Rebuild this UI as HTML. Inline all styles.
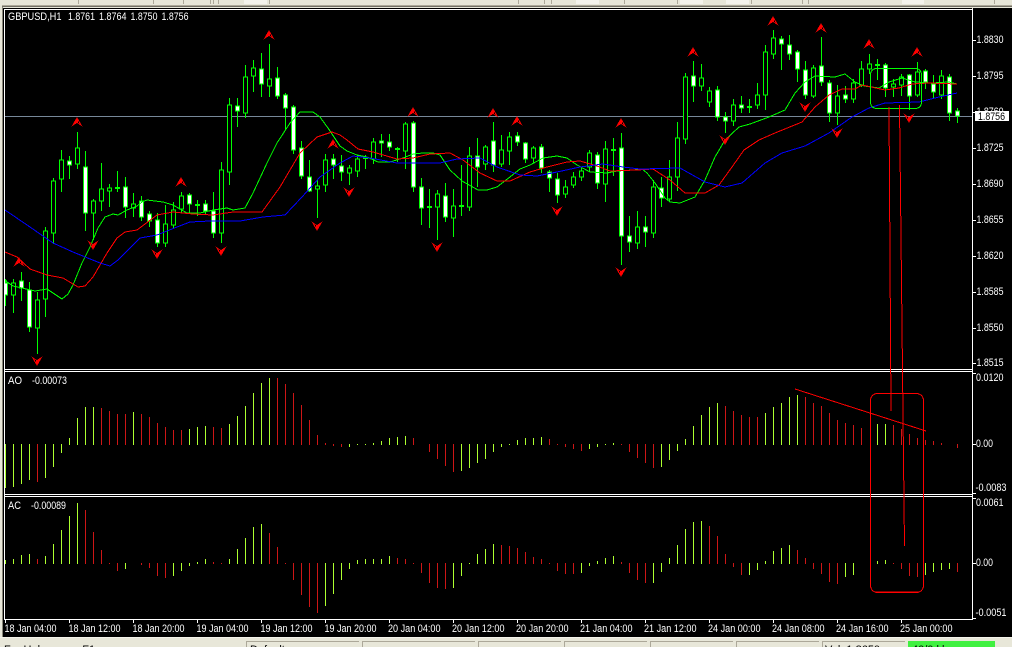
<!DOCTYPE html>
<html lang="en"><head><meta charset="utf-8"><title>GBPUSD,H1</title>
<style>html,body{margin:0;padding:0;background:#000;width:1012px;height:647px;overflow:hidden}svg{display:block}text{font-family:"Liberation Sans",sans-serif;font-size:11px}</style>
</head><body>
<svg xmlns="http://www.w3.org/2000/svg" width="1012" height="647" viewBox="0 0 1012 647" shape-rendering="crispEdges">
<defs><clipPath id="m"><rect x="5" y="10" width="967" height="359"/></clipPath></defs>
<rect width="1012" height="647" fill="#000"/>
<!-- top toolbar -->
<rect width="1012" height="5" fill="#e7e6d8"/><rect y="5" width="1012" height="1" fill="#aca899"/><rect y="6" width="1012" height="1" fill="#716f64"/><rect y="7" width="1012" height="2" fill="#e7e6d8"/>
<rect x="973" y="8" width="39" height="1" fill="#000"/>
<path d="M78.5 0V4M153.5 0V4M183.5 0V4M210.5 0V4M213.5 0V4M218.5 0V4M269.5 0V4M518.5 0V4M544.5 0V4M551.5 0V4M624.5 0V4M677.5 0V4M751.5 0V4M802.5 0V4M808.5 0V4M994.5 0V4" stroke="#aca899" fill="none"/>
<path d="M244 0h23v4h-23zM576 0h23v4h-23zM680 0h23v4h-23zM726 0h23v4h-23zM902 0h22v4h-22z" fill="#f4f3ec"/>
<!-- left edge -->
<rect x="0" y="0" width="2" height="647" fill="#e7e6d8"/><rect x="2" y="7" width="1" height="630" fill="#8a887a"/>
<rect x="3" y="8" width="969" height="1" fill="#000"/>
<!-- frames -->
<path d="M4 9.5H973M4 369.5H973M4 371.5H973M4 494.5H973M4 496.5H973M4 619.5H973M4.5 9V620M972.5 9V620" stroke="#fff" fill="none"/>
<!-- axis ticks -->
<path d="M5.5 620v3M69.5 620v3M133.5 620v3M197.5 620v3M261.5 620v3M325.5 620v3M389.5 620v3M453.5 620v3M517.5 620v3M581.5 620v3M645.5 620v3M709.5 620v3M773.5 620v3M837.5 620v3M901.5 620v3M973 40.5h3M973 76.5h3M973 112.5h3M973 148.5h3M973 184.5h3M973 220.5h3M973 256.5h3M973 292.5h3M973 328.5h3M973 363.5h3M973 373.5h3M973 444.5h3M973 493.5h3M973 498.5h3M973 563.5h3M973 618.5h3" stroke="#fff" fill="none"/>
<g clip-path="url(#m)">
<path fill="none" stroke="#778899" d="M5 116.5H972"/>
<!-- wicks -->
<path fill="none" stroke="#0f0" d="M5.5 280V306M13.5 279V313M21.5 272V301M29.5 282V332M37.5 292V354M45.5 227V317M53.5 178V244M61.5 150V192M69.5 156V179M77.5 132V169M85.5 151V231M93.5 199V240M101.5 163V211M109.5 184V207M117.5 171V192M125.5 177V218M133.5 193V217M141.5 196V221M149.5 211V227M157.5 213V247M165.5 205V247M173.5 202V228M181.5 192V213M189.5 193V213M197.5 200V216M205.5 200V215M213.5 192V238M221.5 162V243M229.5 98V185M237.5 98V127M245.5 65V118M253.5 60V92M261.5 53V97M269.5 44V97M277.5 67V99M285.5 93V130M293.5 105V154M301.5 141V179M309.5 160V192M317.5 180V218M325.5 154V192M333.5 154V179M341.5 155V181M349.5 165V185M357.5 155V177M365.5 155V169M373.5 138V164M381.5 134V157M389.5 134V151M397.5 147V162M405.5 122V169M413.5 121V192M421.5 178V225M429.5 189V228M437.5 190V240M445.5 183V222M453.5 189V237M461.5 165V216M469.5 147V211M477.5 138V187M485.5 145V170M493.5 122V172M501.5 135V167M509.5 132V165M517.5 132V146M525.5 142V163M533.5 146V163M541.5 144V173M549.5 170V192M557.5 173V203M565.5 180V198M573.5 172V188M581.5 167V181M589.5 150V172M597.5 152V189M605.5 141V202M613.5 138V176M621.5 133V265M629.5 216V252M637.5 211V249M645.5 216V247M653.5 180V238M661.5 177V207M669.5 160V202M677.5 122V191M685.5 73V144M693.5 61V102M701.5 64V91M709.5 87V107M717.5 86V121M725.5 112V133M733.5 99V126M741.5 96V113M749.5 99V113M757.5 83V109M765.5 45V110M773.5 30V59M781.5 36V70M789.5 35V60M797.5 50V82M805.5 61V99M813.5 65V98M821.5 37V86M829.5 80V122M837.5 85V125M845.5 86V103M853.5 79V103M861.5 61V87M869.5 54V74M877.5 59V80M885.5 63V97M893.5 79V97M901.5 74V96M909.5 74V110M917.5 62V97M925.5 69V89M933.5 75V99M941.5 70V99M949.5 74V121M957.5 108V123"/>
<!-- dojis -->
<path fill="none" stroke="#0f0" stroke-width="2" d="M115 188h5M195 205h5M363 158h5M395 149h5M427 207h5M459 206h5M611 150h5M747 107h5M875 65h5"/>
<!-- white bodies -->
<path fill="#fff" stroke="#0f0" d="M3.5 283h4V295h-4zM19.5 281h4V288h-4zM27.5 290h4V327h-4zM67.5 161h4V165h-4zM83.5 167h4V213h-4zM123.5 187h4V207h-4zM139.5 201h4V217h-4zM147.5 214h4V221h-4zM155.5 220h4V243h-4zM187.5 195h4V204h-4zM203.5 204h4V211h-4zM211.5 211h4V233h-4zM235.5 106h4V111h-4zM259.5 69h4V84h-4zM275.5 78h4V96h-4zM283.5 95h4V108h-4zM291.5 107h4V150h-4zM299.5 148h4V176h-4zM307.5 177h4V191h-4zM331.5 159h4V165h-4zM339.5 166h4V172h-4zM379.5 141h4V143h-4zM387.5 142h4V147h-4zM411.5 123h4V187h-4zM419.5 187h4V208h-4zM443.5 196h4V217h-4zM475.5 156h4V167h-4zM491.5 141h4V165h-4zM515.5 136h4V142h-4zM523.5 143h4V159h-4zM539.5 147h4V168h-4zM547.5 172h4V178h-4zM555.5 179h4V195h-4zM595.5 155h4V183h-4zM619.5 148h4V236h-4zM627.5 236h4V242h-4zM643.5 227h4V232h-4zM659.5 188h4V198h-4zM691.5 76h4V86h-4zM715.5 90h4V117h-4zM723.5 117h4V121h-4zM739.5 105h4V108h-4zM779.5 39h4V44h-4zM787.5 45h4V54h-4zM795.5 52h4V69h-4zM803.5 70h4V95h-4zM819.5 66h4V82h-4zM827.5 83h4V113h-4zM843.5 95h4V99h-4zM883.5 65h4V88h-4zM907.5 75h4V96h-4zM923.5 71h4V82h-4zM931.5 84h4V92h-4zM947.5 77h4V113h-4zM955.5 111h4V116h-4z"/>
<!-- black bodies -->
<path fill="#000" stroke="#0f0" d="M11.5 283h4V295h-4zM35.5 300h4V328h-4zM43.5 231h4V299h-4zM51.5 181h4V233h-4zM59.5 160h4V179h-4zM75.5 148h4V164h-4zM91.5 201h4V213h-4zM99.5 189h4V201h-4zM107.5 188h4V191h-4zM131.5 204h4V208h-4zM163.5 224h4V243h-4zM171.5 210h4V225h-4zM179.5 196h4V209h-4zM219.5 170h4V233h-4zM227.5 105h4V172h-4zM243.5 77h4V113h-4zM251.5 68h4V76h-4zM267.5 79h4V86h-4zM315.5 186h4V189h-4zM323.5 160h4V185h-4zM347.5 168h4V173h-4zM355.5 159h4V171h-4zM371.5 142h4V159h-4zM403.5 124h4V151h-4zM435.5 194h4V207h-4zM451.5 206h4V218h-4zM467.5 156h4V207h-4zM483.5 147h4V164h-4zM499.5 150h4V164h-4zM507.5 137h4V151h-4zM531.5 148h4V158h-4zM563.5 187h4V194h-4zM571.5 177h4V185h-4zM579.5 171h4V177h-4zM587.5 153h4V167h-4zM603.5 149h4V184h-4zM635.5 227h4V243h-4zM651.5 187h4V233h-4zM667.5 177h4V199h-4zM675.5 138h4V177h-4zM683.5 77h4V139h-4zM699.5 78h4V86h-4zM707.5 91h4V102h-4zM731.5 105h4V121h-4zM755.5 95h4V105h-4zM763.5 52h4V95h-4zM771.5 38h4V54h-4zM811.5 68h4V96h-4zM835.5 96h4V113h-4zM851.5 83h4V99h-4zM859.5 69h4V85h-4zM867.5 64h4V69h-4zM891.5 84h4V87h-4zM899.5 77h4V85h-4zM915.5 72h4V95h-4zM939.5 76h4V95h-4z"/>
<!-- moving averages -->
<polyline fill="none" stroke="#0f0" points="5,279 7,282 13,286 22,288 35,291 47,289 62,299 68,294 73,285 82,263 90,247 98,228 105,217 113,214 118,215 127,210 137,206 142,202 147,200 163,202 173,205 187,213 200,213 213,210 227,208 233,210 245,208 253,193 267,163 277,143 290,123 300,112 313,112 320,117 328,128 340,146 347,151 357,155 367,157 378,162 390,162 403,158 413,154 423,153 433,153 440,155 450,170 462,181 478,190 487,190 497,187 510,177 520,169 530,165 543,158 557,156 567,158 577,165 590,172 607,173 617,171 633,170 642,169 647,173 655,183 665,198 670,202 680,203 695,197 705,180 715,157 725,140 739,127 750,124 769,117 785,110 795,93 805,82 815,76 835,77 845,74 855,82 864,86 879,88 889,82 902,78 915,82 932,83 949,82 957,84"/>
<polyline fill="none" stroke="#f00" points="5,252 17,257 30,269 47,275 63,278 78,287 85,286 93,277 107,253 117,238 125,232 137,230 157,215 173,212 193,214 213,215 233,212 250,212 262,212 280,187 300,153 317,137 332,132 340,135 347,140 358,149 373,152 397,159 413,158 430,154 450,153 463,160 480,173 497,181 510,181 530,172 547,167 567,162 580,161 597,166 610,171 637,170 653,169 670,180 685,193 705,193 719,185 732,167 744,150 759,140 775,133 802,122 815,107 829,95 842,89 855,89 862,85 885,90 899,88 912,84 929,83 957,84"/>
<polyline fill="none" stroke="#00f" points="5,210 30,227 53,243 73,252 100,263 110,266 118,260 140,238 157,235 177,227 190,222 210,221 240,221 263,217 285,215 302,197 320,177 340,163 353,156 370,158 397,163 440,163 457,159 480,158 497,167 520,175 537,176 557,172 580,167 603,164 623,167 640,169 680,168 705,182 725,187 742,183 765,163 782,153 805,146 829,133 852,117 869,108 885,103 919,102 939,97 957,93"/>
<!-- fractal arrows -->
<path fill="#f00" fill-rule="evenodd" d="M77 117l5.5 9.5-5.5-3.5-5.5 3.5zM78 120.500l1.600 3.300-1.600-1zM181 177l5.5 9.5-5.5-3.5-5.5 3.5zM182 180.500l1.600 3.300-1.600-1zM269 30l5.5 9.5-5.5-3.5-5.5 3.5zM270 33.500l1.600 3.300-1.600-1zM333 139l5.5 9.5-5.5-3.5-5.500 3.500zM334 142.500l1.600 3.300-1.600-1zM19 257l5.5 9.5-5.5-3.5-5.5 3.5zM20 260.500l1.600 3.300-1.600-1zM413 107l5.5 9.5-5.5-3.5-5.5 3.5zM414 110.500l1.600 3.300-1.600-1zM493 108l5.5 9.5-5.5-3.5-5.5 3.5zM494 111.500l1.600 3.300-1.600-1zM517 116l5.5 9.5-5.5-3.5-5.5 3.5zM518 119.500l1.600 3.300-1.600-1zM621 118l5.5 9.5-5.5-3.5-5.5 3.5zM622 121.500l1.600 3.300-1.600-1zM693 47l5.5 9.5-5.5-3.5-5.5 3.5zM694 50.500l1.600 3.300-1.600-1zM773 16l5.5 9.5-5.5-3.5-5.5 3.5zM774 19.500l1.600 3.300-1.600-1zM821 23l5.5 9.5-5.5-3.5-5.5 3.5zM822 26.500l1.600 3.300-1.600-1zM869 39l5.5 9.5-5.5-3.5-5.5 3.5zM870 42.500l1.600 3.300-1.600-1zM917 47l5.5 9.5-5.5-3.5-5.5 3.5zM918 50.500l1.600 3.300-1.600-1z"/>
<path fill="#f00" fill-rule="evenodd" d="M37 366l5.5-9.5-5.5 3.5-5.5-3.5zM36 362.500l-1.600-3.300 1.600 1zM93 250l5.5-9.5-5.5 3.5-5.5-3.5zM92 246.500l-1.600-3.300 1.600 1zM157 259l5.5-9.5-5.5 3.5-5.5-3.5zM156 255.500l-1.600-3.300 1.600 1zM221 256l5.5-9.5-5.5 3.5-5.5-3.5zM220 252.500l-1.600-3.300 1.600 1zM317 231l5.5-9.5-5.5 3.5-5.5-3.5zM316 227.500l-1.600-3.300 1.600 1zM349 197l5.5-9.5-5.5 3.5-5.5-3.5zM348 193.500l-1.600-3.300 1.600 1zM437 252l5.5-9.5-5.5 3.5-5.5-3.5zM436 248.500l-1.600-3.300 1.600 1zM557 216l5.5-9.5-5.5 3.5-5.5-3.5zM556 212.500l-1.600-3.300 1.600 1zM621 277l5.5-9.5-5.5 3.5-5.5-3.5zM620 273.500l-1.600-3.300 1.600 1zM725 145l5.5-9.5-5.5 3.5-5.5-3.5zM724 141.500l-1.600-3.300 1.600 1zM805 112l5.5-9.5-5.5 3.5-5.5-3.5zM804 108.500l-1.600-3.300 1.600 1zM837 138l5.5-9.5-5.5 3.5-5.5-3.5zM836 134.500l-1.600-3.300 1.600 1zM909 123l5.5-9.5-5.5 3.5-5.5-3.5zM908 119.500l-1.600-3.300 1.600 1z"/>
<rect x="870.5" y="68.5" width="51" height="40" rx="6" ry="6" fill="none" stroke="#0f0"/>
</g>
<!-- histograms -->
<path fill="none" stroke="#adff2f" d="M5.5 444V488M13.5 444V487M21.5 444V484M29.5 444V480M45.5 444V478M53.5 444V467M61.5 444V453M69.5 445V438M77.5 445V418M85.5 445V407M93.5 445V407M133.5 445V412M189.5 445V429M197.5 445V427M205.5 445V426M229.5 445V424M237.5 445V416M245.5 445V406M253.5 445V393M261.5 445V383M269.5 445V378M349.5 444V447M357.5 444V445M365.5 444V445M373.5 445V443M381.5 445V441M389.5 445V438M397.5 445V437M405.5 445V436M461.5 444V471M469.5 444V468M477.5 444V463M485.5 444V459M493.5 444V452M501.5 444V447M509.5 444V445M517.5 445V440M525.5 445V438M533.5 445V438M541.5 445V437M589.5 444V449M597.5 444V447M605.5 444V445M613.5 445V443M661.5 444V467M669.5 444V460M677.5 444V451M685.5 445V439M693.5 445V426M701.5 445V415M709.5 445V407M717.5 445V403M765.5 445V413M773.5 445V407M781.5 445V403M789.5 445V397M797.5 445V395M877.5 445V424M885.5 445V424
M5.5 564V560M13.5 564V559M21.5 564V555M29.5 564V554M45.5 564V556M53.5 564V544M61.5 564V530M69.5 564V516M77.5 564V503M125.5 563V569M173.5 563V576M181.5 563V571M189.5 563V566M197.5 564V562M205.5 564V559M229.5 564V559M237.5 564V549M245.5 564V538M253.5 564V527M261.5 564V524M325.5 563V606M333.5 563V594M341.5 563V580M349.5 563V569M357.5 564V560M365.5 564V559M373.5 564V559M381.5 564V559M389.5 564V556M453.5 563V588M461.5 563V576M469.5 563V564M477.5 564V554M485.5 564V549M493.5 564V544M581.5 563V573M589.5 563V566M597.5 564V561M605.5 564V558M613.5 564V556M653.5 563V583M661.5 563V572M669.5 564V558M677.5 564V545M685.5 564V529M693.5 564V522M701.5 564V521M749.5 563V575M757.5 563V570M765.5 564V561M773.5 564V551M781.5 564V548M789.5 564V545M837.5 563V581M845.5 563V577M853.5 563V575M877.5 564V561M885.5 564V560M925.5 563V575M933.5 563V572M941.5 563V570M949.5 563V569"/>
<path fill="none" stroke="#cd1616" d="M37.5 444V482M101.5 445V408M109.5 445V411M117.5 445V414M125.5 445V414M141.5 445V414M149.5 445V417M157.5 445V423M165.5 445V427M173.5 445V430M181.5 445V430M213.5 445V427M221.5 445V428M277.5 445V378M285.5 445V384M293.5 445V393M301.5 445V405M309.5 445V420M317.5 445V435M325.5 445V443M333.5 444V446M341.5 444V447M413.5 445V438M429.5 444V452M437.5 444V459M445.5 444V466M453.5 444V472M549.5 445V439M557.5 444V445M565.5 444V447M573.5 444V449M581.5 444V451M621.5 444V445M629.5 444V452M637.5 444V458M645.5 444V463M653.5 444V468M725.5 445V406M733.5 445V411M741.5 445V415M749.5 445V417M757.5 445V417M805.5 445V397M813.5 445V403M821.5 445V406M829.5 445V413M837.5 445V420M845.5 445V423M853.5 445V425M861.5 445V428M893.5 445V425M901.5 445V429M909.5 445V434M917.5 445V438M925.5 445V440M933.5 445V441M941.5 445V443M957.5 444V448
M37.5 564V559M85.5 564V510M93.5 564V532M101.5 564V550M109.5 563V564M117.5 563V571M141.5 563V565M149.5 563V568M157.5 563V576M165.5 563V578M213.5 564V562M221.5 563V564M269.5 564V533M277.5 564V547M285.5 563V564M293.5 563V580M301.5 563V595M309.5 563V607M317.5 563V613M397.5 564V558M405.5 564V559M413.5 563V564M421.5 563V573M429.5 563V583M437.5 563V588M445.5 563V589M501.5 564V545M509.5 564V546M517.5 564V548M525.5 564V552M533.5 564V557M541.5 564V559M549.5 563V564M557.5 563V571M565.5 563V574M573.5 563V574M621.5 564V562M629.5 563V573M637.5 563V580M645.5 563V583M709.5 564V526M717.5 564V536M725.5 564V554M733.5 563V567M741.5 563V575M797.5 564V550M805.5 564V558M813.5 563V569M821.5 563V574M829.5 563V582M837.5 563V584M893.5 563V564M901.5 563V569M909.5 563V576M917.5 563V577M957.5 563V572"/>
<!-- drawn objects -->
<g fill="none" stroke="#f00">
<path d="M889 107L891 411"/>
<path d="M899.5 105L904.5 546"/>
<path d="M795 389L926 431"/>
<rect x="870.5" y="393.5" width="53" height="199" rx="7" ry="7"/>
<path d="M876 592h42"/>
</g>
<!-- text -->
<g fill="#fff">
<text x="8" y="20" textLength="53.5" lengthAdjust="spacingAndGlyphs">GBPUSD,H1</text>
<text x="68" y="20" textLength="27" lengthAdjust="spacingAndGlyphs">1.8761</text>
<text x="99" y="20" textLength="27.5" lengthAdjust="spacingAndGlyphs">1.8764</text>
<text x="130.500" y="20" textLength="27" lengthAdjust="spacingAndGlyphs">1.8750</text>
<text x="161.500" y="20" textLength="27" lengthAdjust="spacingAndGlyphs">1.8756</text>
<text x="8" y="384" textLength="14" lengthAdjust="spacingAndGlyphs">AO</text>
<text x="32" y="384" textLength="35" lengthAdjust="spacingAndGlyphs">-0.00073</text>
<text x="8" y="509" textLength="13" lengthAdjust="spacingAndGlyphs">AC</text>
<text x="31" y="509" textLength="35" lengthAdjust="spacingAndGlyphs">-0.00089</text>
<text x="976.500" y="43" textLength="27" lengthAdjust="spacingAndGlyphs">1.8830</text>
<text x="976.500" y="79" textLength="27" lengthAdjust="spacingAndGlyphs">1.8795</text>
<text x="976.500" y="115" textLength="27" lengthAdjust="spacingAndGlyphs">1.8760</text>
<text x="976.500" y="151" textLength="27" lengthAdjust="spacingAndGlyphs">1.8725</text>
<text x="976.500" y="187" textLength="27" lengthAdjust="spacingAndGlyphs">1.8690</text>
<text x="976.500" y="223" textLength="27" lengthAdjust="spacingAndGlyphs">1.8655</text>
<text x="976.500" y="259" textLength="27" lengthAdjust="spacingAndGlyphs">1.8620</text>
<text x="976.500" y="295" textLength="27" lengthAdjust="spacingAndGlyphs">1.8585</text>
<text x="976.500" y="331" textLength="27" lengthAdjust="spacingAndGlyphs">1.8550</text>
<text x="976.500" y="366" textLength="27" lengthAdjust="spacingAndGlyphs">1.8515</text>
<text x="976" y="381" textLength="27.500" lengthAdjust="spacingAndGlyphs">0.0120</text>
<text x="976" y="447" textLength="17" lengthAdjust="spacingAndGlyphs">0.00</text>
<text x="975.500" y="491" textLength="31" lengthAdjust="spacingAndGlyphs">-0.0083</text>
<text x="976" y="506" textLength="27.500" lengthAdjust="spacingAndGlyphs">0.0061</text>
<text x="976" y="566" textLength="17" lengthAdjust="spacingAndGlyphs">0.00</text>
<text x="975.500" y="616" textLength="31" lengthAdjust="spacingAndGlyphs">-0.0051</text>
<text x="4.500" y="632" textLength="52" lengthAdjust="spacingAndGlyphs">18 Jan 04:00</text>
<text x="68.500" y="632" textLength="52" lengthAdjust="spacingAndGlyphs">18 Jan 12:00</text>
<text x="132.500" y="632" textLength="52" lengthAdjust="spacingAndGlyphs">18 Jan 20:00</text>
<text x="196.500" y="632" textLength="52" lengthAdjust="spacingAndGlyphs">19 Jan 04:00</text>
<text x="260.500" y="632" textLength="52" lengthAdjust="spacingAndGlyphs">19 Jan 12:00</text>
<text x="324.500" y="632" textLength="52" lengthAdjust="spacingAndGlyphs">19 Jan 20:00</text>
<text x="388" y="632" textLength="52.500" lengthAdjust="spacingAndGlyphs">20 Jan 04:00</text>
<text x="452" y="632" textLength="52.500" lengthAdjust="spacingAndGlyphs">20 Jan 12:00</text>
<text x="516" y="632" textLength="52.500" lengthAdjust="spacingAndGlyphs">20 Jan 20:00</text>
<text x="580" y="632" textLength="52.500" lengthAdjust="spacingAndGlyphs">21 Jan 04:00</text>
<text x="644" y="632" textLength="52.500" lengthAdjust="spacingAndGlyphs">21 Jan 12:00</text>
<text x="708" y="632" textLength="52.500" lengthAdjust="spacingAndGlyphs">24 Jan 00:00</text>
<text x="772" y="632" textLength="52.500" lengthAdjust="spacingAndGlyphs">24 Jan 08:00</text>
<text x="836" y="632" textLength="52.500" lengthAdjust="spacingAndGlyphs">24 Jan 16:00</text>
<text x="900" y="632" textLength="52.500" lengthAdjust="spacingAndGlyphs">25 Jan 00:00</text>
</g>
<!-- last price label -->
<rect x="975" y="111" width="34" height="10" fill="#fff"/>
<text x="978" y="120" fill="#000" textLength="27" lengthAdjust="spacingAndGlyphs">1.8756</text>
<!-- status bar -->
<rect x="0" y="637" width="1012" height="10" fill="#e8e7d9"/>
<rect x="0" y="637" width="1012" height="1" fill="#f4f3ea"/>
<g fill="none" stroke="#aca899">
<path d="M246.500 647V641.500H359M362.500 647V641.500H475M478.500 647V641.500H561M564.500 647V641.500H647M650.500 647V641.500H733M736.500 647V641.500H819M822.500 647V641.500H905"/>
</g>
<rect x="908" y="641" width="87" height="6" fill="#40f040"/>
<g fill="#000">
<text x="4" y="653">For Help, press F1</text>
<text x="250" y="653">Default</text>
<text x="825" y="653">Vol: 1.8650</text>
<text x="912" y="653">40/0 kb</text>
</g>
</svg>
</body></html>
